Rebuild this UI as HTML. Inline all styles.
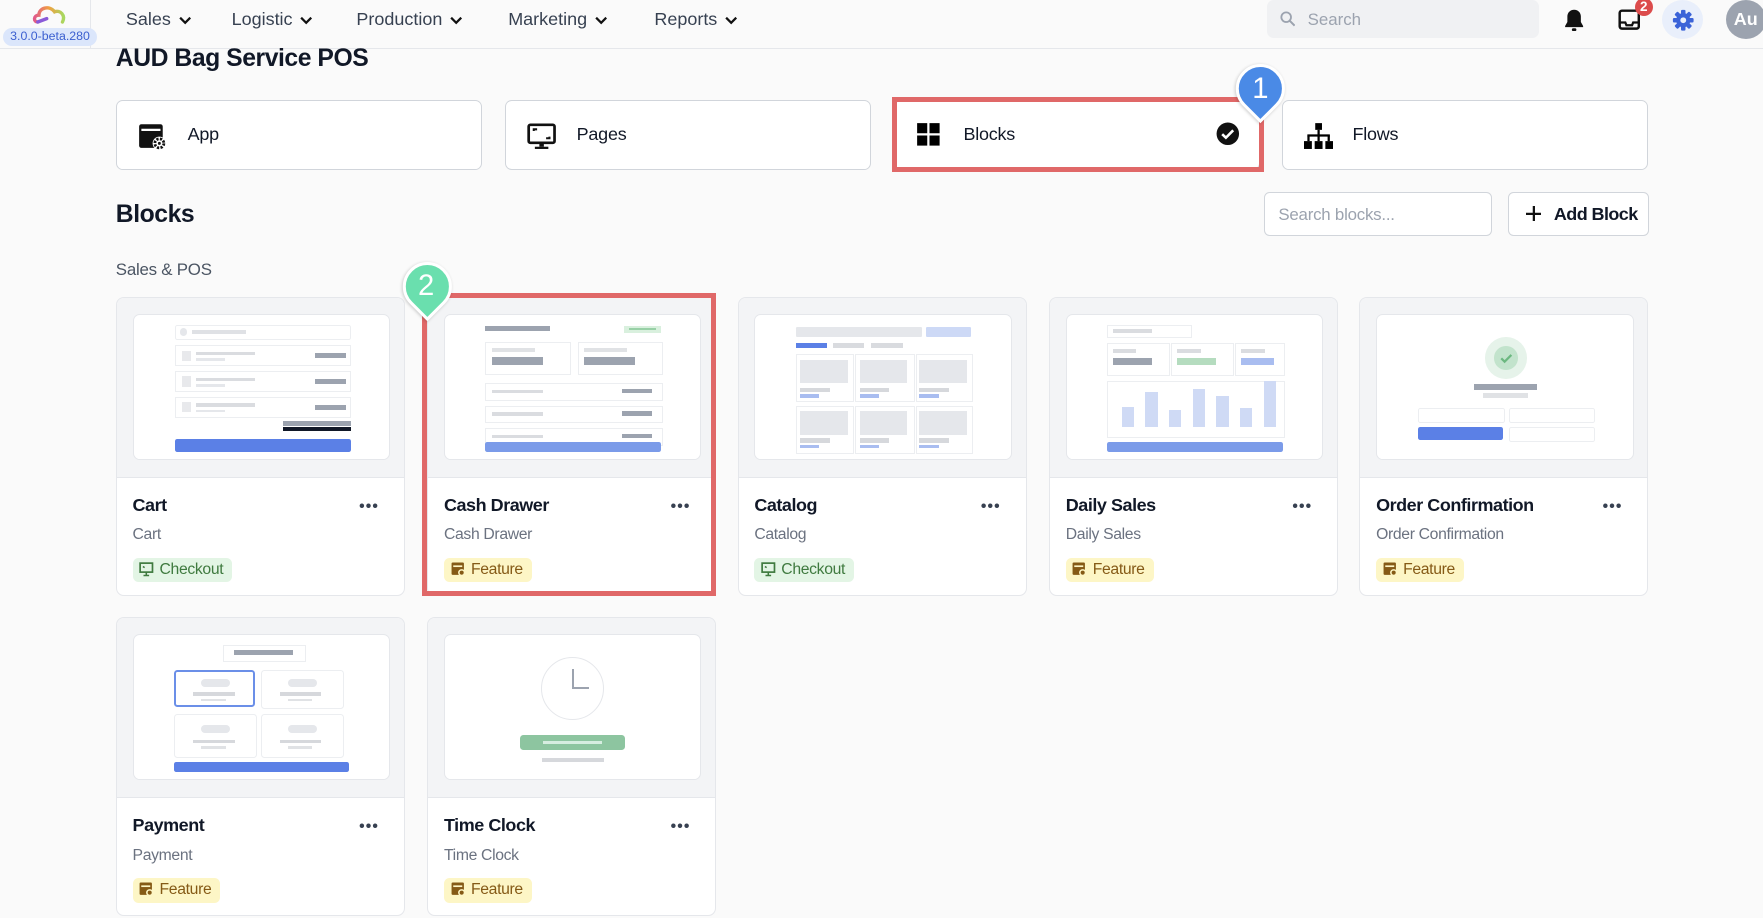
<!DOCTYPE html>
<html><head><meta charset="utf-8">
<style>
html,body{margin:0;padding:0;background:#fafafa;overflow:hidden}
body{width:1763px;height:918px}
#w{position:absolute;left:0;top:0;width:1568px;height:816px;zoom:1.12436;font-family:"Liberation Sans",sans-serif;color:#111827}
.a{position:absolute}
.nav{position:absolute;top:8px;font-size:16px;color:#374151}
.nav svg{vertical-align:middle;margin-left:7px}
.tab{position:absolute;top:89px;height:62px;width:326px;background:#fff;border:1px solid #d1d5db;border-radius:6px;box-sizing:border-box}
.tab .t{position:absolute;left:63px;top:20px;font-size:16px;color:#111827;letter-spacing:-0.2px}
.tab svg{position:absolute;left:19px;top:19px}
.card{position:absolute;width:257px;height:266px;background:#fff;border:1px solid #e5e7eb;border-radius:7px;box-sizing:border-box;overflow:hidden}
.pv{position:absolute;left:0;top:0;right:0;height:159px;background:#f3f4f6;border-bottom:1px solid #e5e7eb}
.ib{position:absolute;left:14px;top:14px;width:229px;height:130px;background:#fff;border:1px solid #e5e7eb;border-radius:6px;box-sizing:border-box;overflow:hidden}
.ib div{position:absolute}
.ct{position:absolute;left:14px;top:175px;font-size:16px;font-weight:bold;color:#111827;letter-spacing:-0.4px}
.cs{position:absolute;left:14px;top:203px;font-size:14px;color:#6b7280;letter-spacing:-0.3px}
.dots{position:absolute;right:22px;top:178px;font-size:14px;letter-spacing:1px;font-weight:bold;color:#374151}
.bd{position:absolute;left:14px;top:231px;height:22px;padding:0 8px 0 24px;border-radius:5px;font-size:14px;line-height:22px;letter-spacing:-0.3px}
.bd.g{background:#e3f5e5;color:#3f7a3f}
.bd.y{background:#fdf6c6;color:#855a16}
.bd svg{position:absolute;left:6px;top:4px}
.pin{position:absolute;width:38px;height:38px;border:3px solid #fff;border-radius:50% 50% 0 50%;transform:rotate(45deg);box-shadow:0 1px 3px rgba(0,0,0,.2)}
.pn{position:absolute;color:#fff;font-size:26px;width:44px;text-align:center}
</style></head><body><div id="w">
<div class="a" style="left:0;top:0;width:1568px;height:43px;border-bottom:1px solid #e5e7eb;background:#fafafa"></div>
<div class="a" style="left:80px;top:0;width:1px;height:43px;background:#e5e7eb"></div>
<svg class="a" style="left:28px;top:4px" width="34" height="22" viewBox="0 0 34 22"><defs><linearGradient id="lg" x1="0" x2="1"><stop offset="0" stop-color="#e05a8a"/><stop offset=".5" stop-color="#f0a040"/><stop offset="1" stop-color="#a8d860"/></linearGradient></defs><path d="M6 16 C2 16 2 10 7 10 C7 3 17 1 21 7 C26 5 31 10 28 16" fill="none" stroke="url(#lg)" stroke-width="3" stroke-linecap="round"/><path d="M6 16 L14 13" stroke="#8a5ad8" stroke-width="3" stroke-linecap="round"/></svg>
<div class="a" style="left:3px;top:25px;width:83px;height:16px;background:#dbe6fb;border-radius:8px;color:#3b5fd0;font-size:11px;line-height:16px;text-align:center">3.0.0-beta.280</div>
<div class="nav" style="left:112px">Sales<svg width="11" height="8" viewBox="0 0 11 8"><path d="M1 1.5l4.5 4.5 4.5-4.5" fill="none" stroke="#111" stroke-width="2"/></svg></div>
<div class="nav" style="left:206px">Logistic<svg width="11" height="8" viewBox="0 0 11 8"><path d="M1 1.5l4.5 4.5 4.5-4.5" fill="none" stroke="#111" stroke-width="2"/></svg></div>
<div class="nav" style="left:317px">Production<svg width="11" height="8" viewBox="0 0 11 8"><path d="M1 1.5l4.5 4.5 4.5-4.5" fill="none" stroke="#111" stroke-width="2"/></svg></div>
<div class="nav" style="left:452px">Marketing<svg width="11" height="8" viewBox="0 0 11 8"><path d="M1 1.5l4.5 4.5 4.5-4.5" fill="none" stroke="#111" stroke-width="2"/></svg></div>
<div class="nav" style="left:582px">Reports<svg width="11" height="8" viewBox="0 0 11 8"><path d="M1 1.5l4.5 4.5 4.5-4.5" fill="none" stroke="#111" stroke-width="2"/></svg></div>
<div class="a" style="left:1127px;top:0;width:242px;height:34px;background:#f0f1f3;border-radius:6px"></div>
<svg class="a" style="left:1138px;top:10px" width="14" height="14" viewBox="0 0 14 14"><circle cx="5.5" cy="5.5" r="4.3" fill="none" stroke="#9ca3af" stroke-width="1.6"/><path d="M8.7 8.7L13 13" stroke="#9ca3af" stroke-width="1.8"/></svg>
<div class="a" style="left:1163px;top:9px;font-size:15px;color:#9ca3af">Search</div>
<svg class="a" style="left:1391px;top:7px" width="18" height="22" viewBox="0 0 18 22"><path d="M9 1.5c-3.5 0-6 2.6-6 6v5L1 16v1h16v-1l-2-3.5v-5c0-3.4-2.5-6-6-6z" fill="#111"/><rect x="7" y="18" width="4" height="2.5" rx="1.2" fill="#111"/></svg>
<svg class="a" style="left:1439px;top:8px" width="20" height="20" viewBox="0 0 20 20"><rect x="1.5" y="1.5" width="17" height="16" rx="2" fill="none" stroke="#111" stroke-width="2.2"/><path d="M1.5 12h5l1 2.5h5l1-2.5h5" fill="none" stroke="#111" stroke-width="2"/></svg>
<div class="a" style="left:1454px;top:-2px;width:16px;height:16px;border-radius:8px;background:#dc4c4c;color:#fff;font-size:12px;font-weight:bold;text-align:center;line-height:16px">2</div>
<div class="a" style="left:1478px;top:0;width:37px;height:35px;border-radius:50%;background:#e9effb"></div>
<svg class="a" style="left:1487px;top:8px" width="20" height="20" viewBox="0 0 20 20"><g fill="#3b63d8"><circle cx="10" cy="10" r="6.3"/><rect x="8" y="0.8" width="4" height="4" rx="1"/><rect x="8" y="15.2" width="4" height="4" rx="1"/><rect x="0.8" y="8" width="4" height="4" rx="1"/><rect x="15.2" y="8" width="4" height="4" rx="1"/><rect x="8" y="0.8" width="4" height="4" rx="1" transform="rotate(45 10 10)"/><rect x="8" y="15.2" width="4" height="4" rx="1" transform="rotate(45 10 10)"/><rect x="0.8" y="8" width="4" height="4" rx="1" transform="rotate(45 10 10)"/><rect x="15.2" y="8" width="4" height="4" rx="1" transform="rotate(45 10 10)"/></g><circle cx="10" cy="10" r="2.6" fill="#e9effb"/></svg>
<div class="a" style="left:1535px;top:0;width:36px;height:35px;border-radius:50%;background:#9ca3af;color:#fff;font-weight:bold;font-size:16px;line-height:35px;text-indent:7px">Au</div>

<div class="a" style="left:103px;top:40px;font-size:22px;font-weight:bold;letter-spacing:-0.4px">AUD Bag Service POS</div>

<div class="tab" style="left:103px"><svg width="26" height="26" viewBox="0 0 26 26"><rect x="1" y="2" width="21" height="21" rx="2" fill="#111"/><rect x="3" y="6" width="17" height="2" fill="#fff"/><circle cx="19" cy="19" r="6" fill="#fff"/><circle cx="19" cy="19" r="4" fill="none" stroke="#111" stroke-width="2.5" stroke-dasharray="2 1.2"/><circle cx="19" cy="19" r="1.3" fill="#111"/></svg><div class="t">App</div></div>
<div class="tab" style="left:449px"><svg width="26" height="26" viewBox="0 0 26 26"><rect x="1.5" y="2.5" width="23" height="16" rx="1.5" fill="none" stroke="#111" stroke-width="2.4"/><path d="M6 8V6.5h3M20 13v1.5h-3" fill="none" stroke="#111" stroke-width="1.8"/><rect x="11" y="19" width="4" height="3" fill="#111"/><rect x="7" y="22" width="12" height="2" fill="#111"/></svg><div class="t">Pages</div></div>
<div class="tab" style="left:795px;width:326px"><svg width="22" height="22" viewBox="0 0 22 22"><rect x="1" y="1" width="9" height="9" fill="#000"/><rect x="12" y="1" width="9" height="9" fill="#000"/><rect x="1" y="12" width="9" height="9" fill="#000"/><rect x="12" y="12" width="9" height="9" fill="#000"/></svg><div class="t" style="left:61px">Blocks</div><svg style="left:286px;top:19px" width="21" height="21" viewBox="0 0 21 21"><circle cx="10.5" cy="10.5" r="10" fill="#111"/><path d="M5.5 10.8l3.3 3.2 6.5-6.6" fill="none" stroke="#fff" stroke-width="2.3"/></svg></div>
<div class="a" style="left:793px;top:86px;width:331px;height:67px;border:5px solid #e06868;box-sizing:border-box"></div>
<div class="tab" style="left:1140px"><svg width="26" height="26" viewBox="0 0 26 26"><rect x="10" y="1" width="6" height="6" fill="#000"/><rect x="12" y="7" width="2" height="5" fill="#000"/><rect x="3" y="11" width="20" height="2" fill="#000"/><rect x="3" y="12" width="2" height="5" fill="#000"/><rect x="12" y="12" width="2" height="5" fill="#000"/><rect x="21" y="12" width="2" height="5" fill="#000"/><rect x="0" y="17" width="7" height="7" fill="#000"/><rect x="9.5" y="17" width="7" height="7" fill="#000"/><rect x="19" y="17" width="7" height="7" fill="#000"/></svg><div class="t" style="left:62px">Flows</div></div>
<div class="pin" style="left:1099px;top:57px;background:#4a8ae6"></div>
<div class="pn" style="left:1099px;top:65px">1</div>

<div class="a" style="left:103px;top:179px;font-size:22px;font-weight:bold;letter-spacing:-0.4px">Blocks</div>
<div class="a" style="left:1124px;top:171px;width:203px;height:39px;background:#fff;border:1px solid #d1d5db;border-radius:5px;box-sizing:border-box"></div>
<div class="a" style="left:1137px;top:182px;font-size:15px;color:#9ca3af;letter-spacing:-0.2px">Search blocks...</div>
<div class="a" style="left:1341px;top:171px;width:126px;height:39px;background:#fff;border:1px solid #d1d5db;border-radius:5px;box-sizing:border-box"></div>
<svg class="a" style="left:1357px;top:183px" width="14" height="14" viewBox="0 0 14 14"><path d="M7 0v14M0 7h14" stroke="#111" stroke-width="2"/></svg>
<div class="a" style="left:1382px;top:181px;font-size:16px;font-weight:bold;letter-spacing:-0.5px">Add Block</div>
<div class="a" style="left:103px;top:231px;font-size:15px;color:#4b5563;letter-spacing:-0.2px">Sales &amp; POS</div>

<div class="card" style="left:103px;top:264px"><div class="pv"><div class="ib">
<div style="left:37px;top:9px;width:155px;height:12px;border:1px solid #eceef1;border-radius:2px"></div><div style="left:41px;top:12px;width:7px;height:7px;border-radius:50%;background:#e5e7eb"></div><div style="left:52px;top:14px;width:48px;height:3px;background:#dfe1e5"></div>
<div style="left:37px;top:27px;width:155px;height:17px;border:1px solid #eceef1"></div><div style="left:43px;top:32px;width:8px;height:9px;background:#e8e9ec"></div><div style="left:56px;top:33px;width:52px;height:3px;background:#dadce0"></div><div style="left:56px;top:39px;width:25px;height:2px;background:#e5e7eb"></div><div style="left:161px;top:34px;width:28px;height:5px;background:#9ca3af"></div>
<div style="left:37px;top:50px;width:155px;height:17px;border:1px solid #eceef1"></div><div style="left:43px;top:55px;width:8px;height:9px;background:#e8e9ec"></div><div style="left:56px;top:56px;width:52px;height:3px;background:#dadce0"></div><div style="left:56px;top:62px;width:25px;height:2px;background:#e5e7eb"></div><div style="left:161px;top:57px;width:28px;height:5px;background:#9ca3af"></div>
<div style="left:37px;top:73px;width:155px;height:17px;border:1px solid #eceef1"></div><div style="left:43px;top:78px;width:8px;height:9px;background:#e8e9ec"></div><div style="left:56px;top:79px;width:52px;height:3px;background:#dadce0"></div><div style="left:56px;top:85px;width:25px;height:2px;background:#e5e7eb"></div><div style="left:161px;top:80px;width:28px;height:5px;background:#9ca3af"></div>
<div style="left:133px;top:95px;width:60px;height:4px;background:#9ca3af"></div><div style="left:133px;top:100px;width:60px;height:4px;background:#111827"></div>
<div style="left:37px;top:111px;width:156px;height:11px;background:#5b80e6;border-radius:2px"></div>
</div></div><div class="ct">Cart</div><div class="dots">•••</div><div class="cs">Cart</div>
<div class="bd g"><svg width="13" height="13" viewBox="0 0 13 13"><rect x="1" y="1" width="11" height="8" fill="none" stroke="#3f7a3f" stroke-width="1.5"/><path d="M4 12h5M6.5 9v3M3.5 4l1.5 1" stroke="#3f7a3f" stroke-width="1.4"/></svg>Checkout</div></div>

<div class="card" style="left:380px;top:264px"><div class="pv"><div class="ib">
<div style="left:36px;top:10px;width:57px;height:5px;background:#9ca3af"></div><div style="left:159px;top:10px;width:33px;height:6px;background:#d9f0de"></div><div style="left:164px;top:12px;width:24px;height:2px;background:#98d0a6"></div>
<div style="left:36px;top:24px;width:74px;height:28px;border:1px solid #eceef1"></div><div style="left:42px;top:30px;width:38px;height:3px;background:#e0e2e5"></div><div style="left:42px;top:38px;width:45px;height:7px;background:#9ca3af"></div>
<div style="left:118px;top:24px;width:74px;height:28px;border:1px solid #eceef1"></div><div style="left:124px;top:30px;width:38px;height:3px;background:#e0e2e5"></div><div style="left:124px;top:38px;width:45px;height:7px;background:#9ca3af"></div>
<div style="left:36px;top:61px;width:156px;height:14px;border:1px solid #eceef1"></div><div style="left:42px;top:67px;width:45px;height:3px;background:#dadce0"></div><div style="left:157px;top:66px;width:27px;height:4px;background:#9ca3af"></div>
<div style="left:36px;top:81px;width:156px;height:14px;border:1px solid #eceef1"></div><div style="left:42px;top:87px;width:45px;height:3px;background:#dadce0"></div><div style="left:157px;top:86px;width:27px;height:4px;background:#9ca3af"></div>
<div style="left:36px;top:101px;width:156px;height:14px;border:1px solid #eceef1"></div><div style="left:42px;top:107px;width:45px;height:3px;background:#dadce0"></div><div style="left:157px;top:106px;width:27px;height:4px;background:#9ca3af"></div>
<div style="left:36px;top:113px;width:156px;height:9px;background:#7b9be9;border-radius:2px"></div>
</div></div><div class="ct">Cash Drawer</div><div class="dots">•••</div><div class="cs">Cash Drawer</div>
<div class="bd y"><svg width="13" height="13" viewBox="0 0 13 13"><rect x="0.5" y="0.5" width="11" height="11" rx="1" fill="#855a16"/><rect x="2" y="3" width="8" height="1.5" fill="#fdf6c6"/><circle cx="9.5" cy="9.5" r="3.2" fill="#fdf6c6"/><circle cx="9.5" cy="9.5" r="1.8" fill="#855a16"/></svg>Feature</div></div>
<div class="a" style="left:375px;top:261px;width:262px;height:269px;border:5px solid #e06868;box-sizing:border-box"></div>
<div class="pin" style="left:358px;top:233px;background:#6adfae"></div>
<div class="pn" style="left:357px;top:240px">2</div>

<div class="card" style="left:656px;top:264px"><div class="pv"><div class="ib">
<div style="left:36px;top:11px;width:112px;height:9px;background:#e5e7eb;border-radius:1px"></div><div style="left:152px;top:11px;width:40px;height:9px;background:#cdd9f6;border-radius:1px"></div>
<div style="left:36px;top:25px;width:28px;height:5px;background:#5b80e6"></div><div style="left:69px;top:25px;width:28px;height:5px;background:#d9dbdf"></div><div style="left:103px;top:25px;width:28px;height:5px;background:#d9dbdf"></div>
<div style="left:36px;top:35px;width:50px;height:41px;border:1px solid #eceef1"></div><div style="left:89px;top:35px;width:51px;height:41px;border:1px solid #eceef1"></div><div style="left:143px;top:35px;width:49px;height:41px;border:1px solid #eceef1"></div>
<div style="left:40px;top:40px;width:42px;height:21px;background:#e5e7eb"></div><div style="left:93px;top:40px;width:42px;height:21px;background:#e5e7eb"></div><div style="left:146px;top:40px;width:42px;height:21px;background:#e5e7eb"></div>
<div style="left:40px;top:65px;width:26px;height:4px;background:#d6d8dc"></div><div style="left:93px;top:65px;width:26px;height:4px;background:#d6d8dc"></div><div style="left:146px;top:65px;width:26px;height:4px;background:#d6d8dc"></div>
<div style="left:40px;top:71px;width:17px;height:3px;background:#a9bdf0"></div><div style="left:93px;top:71px;width:17px;height:3px;background:#a9bdf0"></div><div style="left:146px;top:71px;width:17px;height:3px;background:#a9bdf0"></div>
<div style="left:36px;top:81px;width:50px;height:41px;border:1px solid #eceef1"></div><div style="left:89px;top:81px;width:51px;height:41px;border:1px solid #eceef1"></div><div style="left:143px;top:81px;width:49px;height:41px;border:1px solid #eceef1"></div>
<div style="left:40px;top:86px;width:42px;height:21px;background:#e5e7eb"></div><div style="left:93px;top:86px;width:42px;height:21px;background:#e5e7eb"></div><div style="left:146px;top:86px;width:42px;height:21px;background:#e5e7eb"></div>
<div style="left:40px;top:110px;width:26px;height:4px;background:#d6d8dc"></div><div style="left:93px;top:110px;width:26px;height:4px;background:#d6d8dc"></div><div style="left:146px;top:110px;width:26px;height:4px;background:#d6d8dc"></div>
<div style="left:40px;top:116px;width:17px;height:3px;background:#a9bdf0"></div><div style="left:93px;top:116px;width:17px;height:3px;background:#a9bdf0"></div><div style="left:146px;top:116px;width:17px;height:3px;background:#a9bdf0"></div>
</div></div><div class="ct">Catalog</div><div class="dots">•••</div><div class="cs">Catalog</div>
<div class="bd g"><svg width="13" height="13" viewBox="0 0 13 13"><rect x="1" y="1" width="11" height="8" fill="none" stroke="#3f7a3f" stroke-width="1.5"/><path d="M4 12h5M6.5 9v3M3.5 4l1.5 1" stroke="#3f7a3f" stroke-width="1.4"/></svg>Checkout</div></div>

<div class="card" style="left:933px;top:264px"><div class="pv"><div class="ib">
<div style="left:36px;top:9px;width:74px;height:10px;border:1px solid #eceef1"></div><div style="left:41px;top:13px;width:35px;height:3px;background:#dadce0"></div>
<div style="left:36px;top:25px;width:54px;height:28px;border:1px solid #eceef1"></div><div style="left:41px;top:31px;width:21px;height:3px;background:#dadce0"></div><div style="left:41px;top:39px;width:35px;height:6px;background:#9ca3af"></div>
<div style="left:93px;top:25px;width:54px;height:28px;border:1px solid #eceef1"></div><div style="left:98px;top:31px;width:21px;height:3px;background:#dadce0"></div><div style="left:98px;top:39px;width:35px;height:6px;background:#b5dcbf"></div>
<div style="left:150px;top:25px;width:42px;height:28px;border:1px solid #eceef1"></div><div style="left:155px;top:31px;width:21px;height:3px;background:#dadce0"></div><div style="left:155px;top:39px;width:29px;height:6px;background:#a9bdf0"></div>
<div style="left:36px;top:59px;width:156px;height:49px;border:1px solid #eceef1"></div>
<div style="left:49px;top:82px;width:11px;height:18px;background:#cfdaf5"></div><div style="left:70px;top:69px;width:11px;height:31px;background:#cfdaf5"></div><div style="left:91px;top:85px;width:11px;height:15px;background:#cfdaf5"></div><div style="left:112px;top:66px;width:11px;height:34px;background:#cfdaf5"></div><div style="left:133px;top:72px;width:11px;height:28px;background:#cfdaf5"></div><div style="left:154px;top:83px;width:11px;height:17px;background:#cfdaf5"></div><div style="left:175px;top:59px;width:11px;height:41px;background:#cfdaf5"></div>
<div style="left:36px;top:113px;width:156px;height:9px;background:#7b9be9;border-radius:2px"></div>
</div></div><div class="ct">Daily Sales</div><div class="dots">•••</div><div class="cs">Daily Sales</div>
<div class="bd y"><svg width="13" height="13" viewBox="0 0 13 13"><rect x="0.5" y="0.5" width="11" height="11" rx="1" fill="#855a16"/><rect x="2" y="3" width="8" height="1.5" fill="#fdf6c6"/><circle cx="9.5" cy="9.5" r="3.2" fill="#fdf6c6"/><circle cx="9.5" cy="9.5" r="1.8" fill="#855a16"/></svg>Feature</div></div>

<div class="card" style="left:1209px;top:264px"><div class="pv"><div class="ib">
<div style="left:96px;top:20px;width:37px;height:37px;border-radius:50%;background:#e6f3ea"></div><div style="left:104px;top:28px;width:21px;height:21px;border-radius:50%;background:#c2e3cc"></div>
<svg style="position:absolute;left:108px;top:32px" width="13" height="13" viewBox="0 0 13 13"><path d="M2 6.5l3 3 6-6" fill="none" stroke="#6cb880" stroke-width="2"/></svg>
<div style="left:86px;top:62px;width:56px;height:5px;background:#9ca3af"></div><div style="left:94px;top:70px;width:40px;height:4px;background:#e0e2e5"></div>
<div style="left:36px;top:83px;width:76px;height:12px;border:1px solid #eceef1;border-radius:2px"></div><div style="left:117px;top:83px;width:75px;height:12px;border:1px solid #eceef1;border-radius:2px"></div>
<div style="left:36px;top:100px;width:76px;height:12px;background:#5b80e6;border-radius:2px"></div><div style="left:117px;top:100px;width:75px;height:12px;border:1px solid #eceef1;border-radius:2px"></div>
</div></div><div class="ct">Order Confirmation</div><div class="dots">•••</div><div class="cs">Order Confirmation</div>
<div class="bd y"><svg width="13" height="13" viewBox="0 0 13 13"><rect x="0.5" y="0.5" width="11" height="11" rx="1" fill="#855a16"/><rect x="2" y="3" width="8" height="1.5" fill="#fdf6c6"/><circle cx="9.5" cy="9.5" r="3.2" fill="#fdf6c6"/><circle cx="9.5" cy="9.5" r="1.8" fill="#855a16"/></svg>Feature</div></div>

<div class="card" style="left:103px;top:549px"><div class="pv"><div class="ib">
<div style="left:80px;top:9px;width:72px;height:13px;border:1px solid #eceef1"></div><div style="left:89px;top:13px;width:53px;height:5px;background:#9ca3af"></div>
<div style="left:36px;top:31px;width:72px;height:33px;border:2px solid #6b8fe8;border-radius:3px;box-sizing:border-box"></div><div style="left:113px;top:31px;width:72px;height:33px;border:1px solid #eceef1;border-radius:3px"></div>
<div style="left:60px;top:39px;width:26px;height:7px;border-radius:4px;background:#e5e7eb"></div><div style="left:53px;top:51px;width:37px;height:3px;background:#d6d8dc"></div><div style="left:60px;top:57px;width:22px;height:2px;background:#e0e2e5"></div>
<div style="left:137px;top:39px;width:26px;height:7px;border-radius:4px;background:#e5e7eb"></div><div style="left:130px;top:51px;width:37px;height:3px;background:#d6d8dc"></div><div style="left:137px;top:57px;width:22px;height:2px;background:#e0e2e5"></div>
<div style="left:36px;top:70px;width:72px;height:38px;border:1px solid #eceef1;border-radius:3px"></div><div style="left:113px;top:70px;width:72px;height:38px;border:1px solid #eceef1;border-radius:3px"></div>
<div style="left:60px;top:80px;width:26px;height:7px;border-radius:4px;background:#e5e7eb"></div><div style="left:53px;top:93px;width:37px;height:3px;background:#d6d8dc"></div><div style="left:60px;top:99px;width:22px;height:2px;background:#e0e2e5"></div>
<div style="left:137px;top:80px;width:26px;height:7px;border-radius:4px;background:#e5e7eb"></div><div style="left:130px;top:93px;width:37px;height:3px;background:#d6d8dc"></div><div style="left:137px;top:99px;width:22px;height:2px;background:#e0e2e5"></div>
<div style="left:36px;top:113px;width:156px;height:9px;background:#5b80e6;border-radius:2px"></div>
</div></div><div class="ct">Payment</div><div class="dots">•••</div><div class="cs">Payment</div>
<div class="bd y"><svg width="13" height="13" viewBox="0 0 13 13"><rect x="0.5" y="0.5" width="11" height="11" rx="1" fill="#855a16"/><rect x="2" y="3" width="8" height="1.5" fill="#fdf6c6"/><circle cx="9.5" cy="9.5" r="3.2" fill="#fdf6c6"/><circle cx="9.5" cy="9.5" r="1.8" fill="#855a16"/></svg>Feature</div></div>

<div class="card" style="left:380px;top:549px"><div class="pv"><div class="ib">
<div style="left:85px;top:20px;width:56px;height:56px;border-radius:50%;border:1px solid #e5e7eb;box-sizing:border-box"></div>
<div style="left:113px;top:30px;width:2px;height:18px;background:#9ca3af"></div><div style="left:113px;top:46px;width:15px;height:2px;background:#9ca3af"></div>
<div style="left:67px;top:89px;width:93px;height:13px;border-radius:3px;background:#8dc5a0"></div><div style="left:87px;top:94px;width:53px;height:3px;background:#d6ede0"></div>
<div style="left:86px;top:109px;width:55px;height:4px;background:#d6d8dc"></div>
</div></div><div class="ct">Time Clock</div><div class="dots">•••</div><div class="cs">Time Clock</div>
<div class="bd y"><svg width="13" height="13" viewBox="0 0 13 13"><rect x="0.5" y="0.5" width="11" height="11" rx="1" fill="#855a16"/><rect x="2" y="3" width="8" height="1.5" fill="#fdf6c6"/><circle cx="9.5" cy="9.5" r="3.2" fill="#fdf6c6"/><circle cx="9.5" cy="9.5" r="1.8" fill="#855a16"/></svg>Feature</div></div>
</div></body></html>
